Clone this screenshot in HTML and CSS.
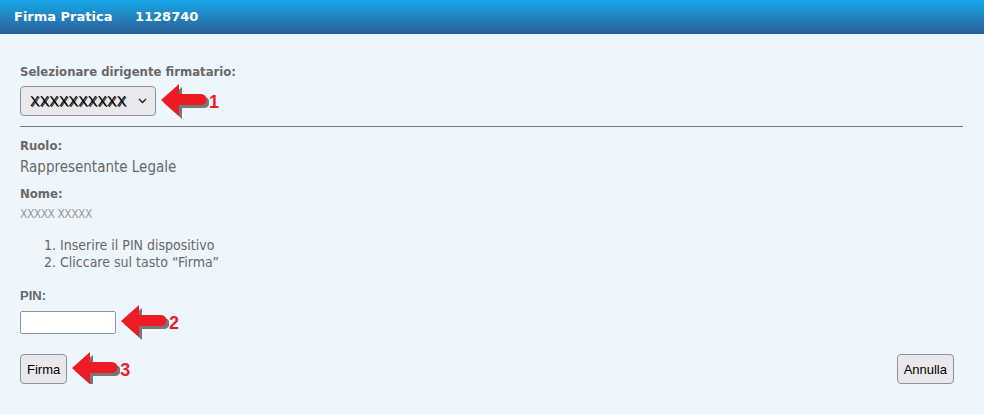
FILE: index.html
```html
<!DOCTYPE html>
<html lang="it">
<head>
    <meta charset="UTF-8">
    <title>Firma Pratica</title>
    <link rel="stylesheet" href="styles.css">
</head>
<body>
<div class="header">
    <span>Firma Pratica</span>
    <span class="num">1128740</span>
</div>
<div class="content">
    <p class="label first">Selezionare dirigente firmatario:</p>
    <div class="row selectrow">
        <div class="select">
            <span class="scribble">XXXXXXXXXX</span>
            <svg class="chev" width="9" height="6" viewBox="0 0 9 6"><path d="M1 1 L4.5 4.5 L8 1" fill="none" stroke="#222" stroke-width="1.4"/></svg>
        </div>
        <svg class="arrow" width="48" height="36" viewBox="0 0 48 36">
            <path d="M3 19 L21 3 L21 13 L43 13 A5.5 5.5 0 0 1 43 24 L21 24 L21 35 Z" fill="#777"/>
            <path d="M0 16 L18 0 L18 10 L40 10 A5.5 5.5 0 0 1 40 21 L18 21 L18 32 Z" fill="#ed1c24"/>
        </svg>
        <span class="step">1</span>
    </div>
    <hr>
    <p class="label">Ruolo:</p>
    <p class="value">Rappresentante Legale</p>
    <p class="label nome">Nome:</p>
    <p class="name">XXXXX XXXXX</p>
    <ol class="steps">
        <li>Inserire il PIN dispositivo</li>
        <li>Cliccare sul tasto “Firma”</li>
    </ol>
    <p class="label pin">PIN:</p>
    <div class="row pinrow">
        <input type="text" class="pininput">
        <svg class="arrow" width="48" height="36" viewBox="0 0 48 36">
            <path d="M3 19 L21 3 L21 13 L43 13 A5.5 5.5 0 0 1 43 24 L21 24 L21 35 Z" fill="#777"/>
            <path d="M0 16 L18 0 L18 10 L40 10 A5.5 5.5 0 0 1 40 21 L18 21 L18 32 Z" fill="#ed1c24"/>
        </svg>
        <span class="step">2</span>
    </div>
    <div class="buttons">
        <div class="row">
            <button class="btn">Firma</button>
            <svg class="arrow" width="48" height="36" viewBox="0 0 48 36">
                <path d="M3 19 L21 3 L21 13 L43 13 A5.5 5.5 0 0 1 43 24 L21 24 L21 35 Z" fill="#777"/>
                <path d="M0 16 L18 0 L18 10 L40 10 A5.5 5.5 0 0 1 40 21 L18 21 L18 32 Z" fill="#ed1c24"/>
            </svg>
            <span class="step">3</span>
        </div>
        <button class="btn">Annulla</button>
    </div>
</div>
</body>
</html>
```
FILE: styles.css
```css
body{
    margin: 0;
    background-color: #eef6fd;
    font-family: "DejaVu Sans Condensed", "DejaVu Sans", sans-serif;
    color: #686868;
}
.header{
    height: 34px;
    background: linear-gradient(#18a8e9, #2a5f97);
    color: white;
    font-family: "DejaVu Sans", sans-serif;
    font-weight: bold;
    font-size: 13px;
    line-height: 34px;
    padding-left: 14px;
}
.header .num{
    margin-left: 18px;
}
.content{
    padding: 0 21px 0 20px;
}
.label{
    font-weight: bold;
    font-size: 13px;
    margin: 0;
    line-height: 16px;
}
.first{
    padding-top: 30px;
}
.row{
    display: flex;
    align-items: center;
}
.selectrow{
    margin-top: 6px;
}
.select{
    width: 134px;
    height: 28px;
    border: 1px solid #8f8f9d;
    border-radius: 4px;
    background-color: #e9e9ed;
    display: flex;
    align-items: center;
}
.scribble{
    font-family: "Liberation Sans", sans-serif;
    font-size: 14px;
    color: black;
    letter-spacing: 0.3px;
    margin-left: 9px;
    text-shadow: 1px 1px 0 #333;
}
.chev{
    margin-left: auto;
    margin-right: 8px;
}
.arrow{
    margin: -5px 0 -7px 5px;
}
.step{
    font-family: "Liberation Sans", sans-serif;
    font-weight: bold;
    font-size: 18px;
    line-height: 20px;
    color: #ed1c24;
    margin-left: 0;
    margin-top: 2px;
}
hr{
    border: none;
    border-top: 1px solid #777;
    margin: 10px 0 11px 0;
}
.value{
    font-size: 15px;
    line-height: 18px;
    margin: 4px 0 0 0;
}
.nome{
    margin-top: 10px;
}
.name{
    font-size: 12px;
    line-height: 14px;
    color: #9a9a9a;
    margin: 5px 0 0 0;
    letter-spacing: -0.5px;
}
.steps{
    font-size: 14px;
    line-height: 17px;
    margin: 16px 0 0 0;
    padding-left: 40px;
}
.pin{
    font-family: "Liberation Sans", sans-serif;
    margin-top: 17px;
}
.pinrow{
    margin-top: 6px;
}
.pininput{
    width: 92px;
    height: 19px;
    box-sizing: content-box;
    margin: 0;
    border: 1px solid #8f8f9d;
    border-radius: 2px;
    padding: 1px;
    background: white;
}
.buttons{
    display: flex;
    justify-content: space-between;
    align-items: center;
    margin-top: 20px;
    padding-right: 9px;
}
.btn{
    font-family: "Liberation Sans", sans-serif;
    font-size: 13px;
    height: 30px;
    padding: 0 6px;
    border: 1px solid #8f8f9d;
    border-radius: 4px;
    background-color: #e9e9ed;
    color: black;
}
```
